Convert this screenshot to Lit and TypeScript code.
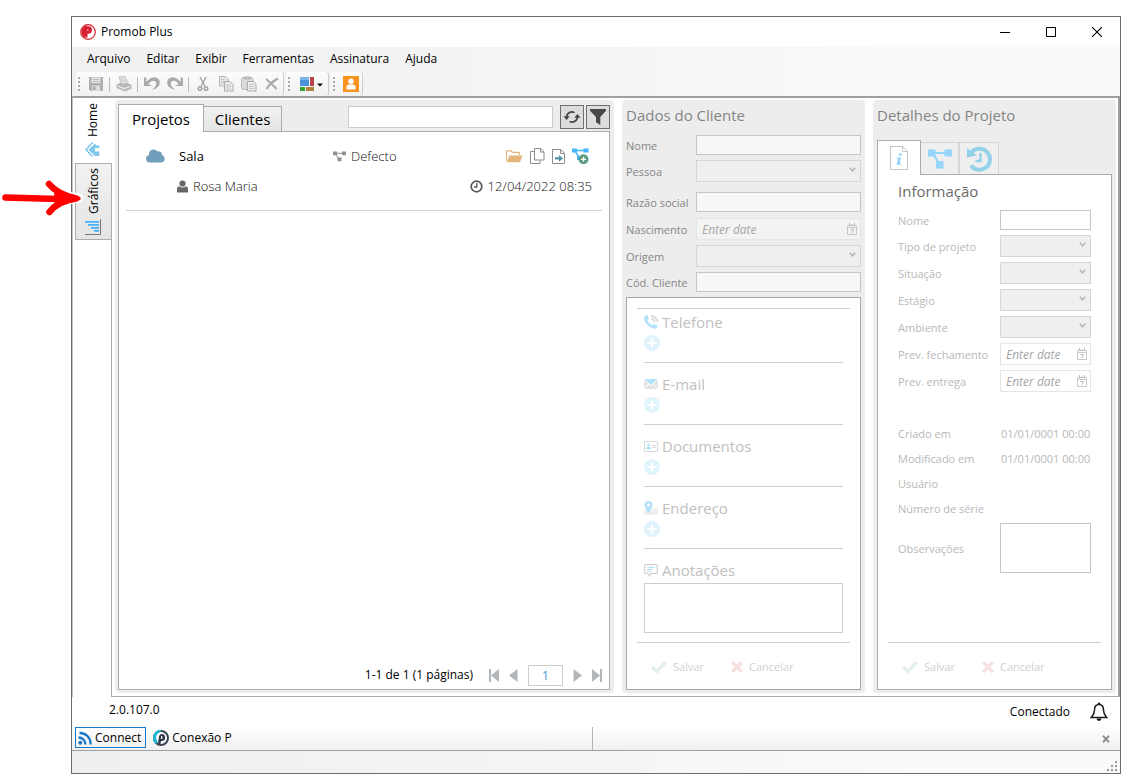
import { LitElement, html, css, svg, nothing } from "lit";
import { customElement, property } from "lit/decorators.js";

const icons: Record<string, unknown> = {
  logo: svg`<svg width="16" height="16" viewBox="0 0 16 16"><circle cx="8" cy="8" r="7.300" fill="#fff" stroke="#d02330" stroke-width="1.200"/><path d="M8 1.500A6.500 6.500 0 0 0 5.500 14L6.300 9.500 7 2.200Z" fill="#d6202f"/><path d="M8.300 2.300a3.700 3.700 0 0 1 0 7.400H7.500V13.300L5.500 13.800 4.500 8 6 2.600Z" fill="#d6202f"/><path d="M7 5.500h1.500v1.200H7z" fill="#f5b8bc"/></svg>`,
  min: svg`<svg width="10" height="10"><path d="M0 5.500h10" stroke="#000"/></svg>`,
  max: svg`<svg width="10" height="10"><path d="M.5 .5h9v9h-9z" stroke="#000" fill="none"/></svg>`,
  close: svg`<svg width="10" height="10"><path d="M0 0l10 10M10 0L0 10" stroke="#000" stroke-width="1.100"/></svg>`,
  save: svg`<svg width="16" height="16" viewBox="0 0 16 16"><path d="M1 1h14v14H2.500L1 13.500Z" fill="#b0b0b0"/><path d="M3.500 1.500h9v5.500h-9z" fill="#e6e6e6"/><path d="M4.500 3.500h7M4.500 5.500h7" stroke="#b4b4b4" stroke-width=".8"/><path d="M4 9.500h8V15H4z" fill="#dedede"/><path d="M5 10.500h2.500V14H5z" fill="#a6a6a6"/></svg>`,
  print: svg`<svg width="16" height="16" viewBox="0 0 16 16"><path d="M3 1l6-.7 3 6.700-6.500 1Z" fill="#e8e8e8" stroke="#b8b8b8" stroke-width=".8"/><path d="M4.500 3h4M5.500 5h4.500" stroke="#bbb" stroke-width=".8"/><path d="M.5 8.500l4-2 1.500 1.500 5.500-1 4 2v4l-7 2.500-8-3.500Z" fill="#b8b8b8"/><path d="M2 10l6 2.500 6-2" stroke="#ececec" stroke-width="1.200" fill="none"/><path d="M4 13l5 2.200 5-2.200" stroke="#ccc" fill="none"/></svg>`,
  undo: svg`<svg width="16" height="16" viewBox="0 0 16 16"><path d="M0 1.500h2.300V6C4.500 3.500 7.500 1 10.800 1.300 14 1.700 16 4 15.700 7.200 15.400 10.300 12.500 13 8 13.500 11 11.500 12.500 9.500 12.200 7.200 11.900 4.800 9 4.200 7 5.600 6 6.300 5 7.300 4.500 8.300L8.500 10H0Z" fill="#a9a9a9"/></svg>`,
  redo: svg`<svg width="16" height="16" viewBox="0 0 16 16"><path d="M16 1.500h-2.300V6C11.500 3.500 8.500 1 5.200 1.300 2 1.700 0 4 .3 7.200.6 10.300 3.500 13 8 13.500 5 11.500 3.500 9.500 3.800 7.200 4.100 4.800 7 4.200 9 5.600c1 .7 2 1.700 2.500 2.700L7.500 10H16Z" fill="#a9a9a9"/></svg>`,
  cut: svg`<svg width="16" height="16" viewBox="0 0 16 16"><path d="M5 1l4.800 9M11 1L6.200 10" stroke="#a8a8a8" stroke-width="1.500"/><circle cx="5" cy="12.500" r="1.800" fill="none" stroke="#a0a0a0" stroke-width="1.400"/><circle cx="11" cy="12.500" r="1.800" fill="none" stroke="#a0a0a0" stroke-width="1.400"/></svg>`,
  copy: svg`<svg width="16" height="16" viewBox="0 0 16 16"><path d="M1.500 .5h6l2.500 2.500v7h-8.500z" fill="#e8e8e8" stroke="#b8b8b8"/><path d="M3 3.500h4M3 5.500h3M3 7.500h3" stroke="#c4c4c4"/><path d="M6.500 5.500h5.500l3 3v6.500h-8.500z" fill="#ededed" stroke="#aaa"/><path d="M8 9h5M8 11h5M8 13h5" stroke="#b8b8b8" stroke-width=".8"/></svg>`,
  paste: svg`<svg width="16" height="16" viewBox="0 0 16 16"><rect x=".5" y="1.500" width="11.500" height="12" rx="2" fill="#dadada" stroke="#b8b8b8"/><path d="M3.500 3V1h1.800a1.300 1.300 0 0 1 2 0H9v2z" fill="#c8c8c8" stroke="#aaa" stroke-width=".8"/><path d="M6.500 5.500h6l2.500 2.500v7h-8.500z" fill="#ededed" stroke="#aaa"/><path d="M8 8.500h5M8 10.500h5M8 12.500h5" stroke="#b8b8b8" stroke-width=".8"/></svg>`,
  del: svg`<svg width="16" height="16" viewBox="0 0 16 16"><path d="M2 3c4 3 7 6 10.500 10M14 2.500C9 5 5 9 2.500 13" fill="none" stroke="#a6a6a6" stroke-width="2"/></svg>`,
  layout: svg`<svg width="24" height="16" viewBox="0 0 24 16"><path d="M1 1h9v9H1z" fill="#4a8fd8"/><path d="M1 1h9v3H1z" fill="#7cb4ec"/><path d="M11 1h4v9h-4z" fill="#b8434c"/><path d="M1 11h5v4H1z" fill="#2fa32f"/><path d="M7 11h8v4H7z" fill="#b08238"/><path d="M18 7.500h6l-3 3z" fill="#000"/></svg>`,
  user: svg`<svg width="16" height="16" viewBox="0 0 16 16"><path d="M0 0h16v16H0z" fill="#f7931e"/><circle cx="8" cy="5.300" r="2.700" fill="#fff"/><path d="M3.500 13.500V11q0-2.500 2.500-2.500h4q2.500 0 2.500 2.500v2.500z" fill="#fff"/></svg>`,
  home: svg`<svg width="16" height="16" viewBox="0 0 16 16"><path d="M7.500 .5L1 7.500l6.500 7" fill="none" stroke="#5db8ea" stroke-width="1.500" stroke-dasharray="2 .6"/><path d="M10 1.500l-6.500 6.200 6.500 6.300h4.300V9.500H10V6h4.300V3.500H11Z" fill="#80c6ea"/></svg>`,
  chart: svg`<svg width="16" height="16" viewBox="0 0 16 16"><path d="M15.500 0v15.500H0" fill="none" stroke="#777"/><path d="M0 2h14v1.800H0zM3 5h11v1.800H3zM6 8h8v1.800H6zM9 11h5v1.800H9z" fill="#45b0f5"/></svg>`,
  refresh: svg`<svg width="18" height="18" viewBox="0 0 18 18"><path d="M3.600 9.500A5.300 5.300 0 0 1 11.500 4.600M14.400 8.500A5.300 5.300 0 0 1 6.500 13.400" fill="none" stroke="#444" stroke-width="1.600"/><path d="M.5 8.300h6.200L3.600 12ZM17.500 9.700h-6.200L14.400 6Z" fill="#444"/></svg>`,
  filter: svg`<svg width="18" height="18" viewBox="0 0 18 18"><path d="M1 1h16v1.800L11.300 9v8l-4.300-2.800V9L1 2.800Z" fill="#484848"/></svg>`,
  cloud: svg`<svg width="19" height="14" viewBox="0 0 19 14"><path d="M4 13.500A3.800 3.800 0 0 1 3 6 C2.800 2.500 5 .5 7.500 .5c1.800 0 3.200 .8 3.900 2 2.600-.8 4.800 .8 4.600 3.300 1.500 .8 2.700 2.300 2.700 4 0 2.200-1.400 3.700-3.400 3.700Z" fill="#719fbb"/></svg>`,
  net: svg`<svg width="13" height="11" viewBox="0 0 13 11"><path d="M2 2.300h9M2.500 2.500L6 8.500" stroke="#a5a5a5" stroke-width="1.200"/><path d="M0 .5h4v3.700H0zM9 .5h4v3.700H9zM4.500 6.500h4v3.700h-4z" fill="#8f8f8f"/></svg>`,
  folder: svg`<svg width="17" height="13" viewBox="0 0 17 13"><path d="M.5 11V1.500Q.5 .8 1.200 .8h4l1.300 1.500h6q.8 0 .8 .8V5" fill="none" stroke="#e3b77c" stroke-width="1.200"/><path d="M3.500 5.500H16.500L14 12.300H.7Z" fill="#e3b77c"/></svg>`,
  pages: svg`<svg width="15" height="16" viewBox="0 0 15 16"><path d="M4.500 .5h6.300l3.200 3.200V12H4.500zM10.500 .5V4H14M4.500 3.500h-4v12H10V12" fill="none" stroke="#8c8c8c"/></svg>`,
  exportDoc: svg`<svg width="13" height="15" viewBox="0 0 13 15"><path d="M.5 .5h8.300l3.700 3.700v10.300H.5zM8.500 .5v4h4" fill="none" stroke="#8c8c8c"/><path d="M3 8.200h4V6l4 3.400-4 3.300v-2.200H3z" fill="#5793a8"/></svg>`,
  netAdd: svg`<svg width="17" height="17" viewBox="0 0 17 17"><path d="M2 2.500h12M3 3l4 6" stroke="#45b5ff" stroke-width="1.500"/><path d="M0 .5h5v4H0zM11.500 .5h5v4h-5z" fill="#45b5ff"/><path d="M5 8h4v4H5z" fill="#45b5ff"/><circle cx="11.500" cy="11.300" r="5" fill="#5f9d82"/><path d="M11.500 8.800v5M9 11.300h5" stroke="#fff" stroke-width="1.300"/></svg>`,
  person: svg`<svg width="11" height="13" viewBox="0 0 11 13"><circle cx="5.500" cy="3.500" r="3.100" fill="#666"/><path d="M0 12V9q0-2.500 2-2.800Q5.500 9 9 6.200 11 6.500 11 9v3q0 .5-1 .5H1Q0 12.500 0 12Z" fill="#666"/></svg>`,
  clock: svg`<svg width="13" height="13" viewBox="0 0 13 13"><circle cx="6.500" cy="6.500" r="5.300" fill="none" stroke="#555" stroke-width="1.700"/><path d="M6.800 3v4H4" fill="none" stroke="#555" stroke-width="1.300"/></svg>`,
  first: svg`<svg width="10" height="13"><path d="M0 0h2v13H0zM10 0v13L2 6.500z" fill="#b4b7ba"/></svg>`,
  prev: svg`<svg width="9" height="13"><path d="M8.500 0v13L0 6.500z" fill="#b4b7ba"/></svg>`,
  next: svg`<svg width="9" height="13"><path d="M.5 0v13L9 6.500z" fill="#b4b7ba"/></svg>`,
  last: svg`<svg width="10" height="13"><path d="M8 0h2v13H8zM0 0v13l8-6.500z" fill="#b4b7ba"/></svg>`,
  calendar: svg`<svg width="10" height="12" viewBox="0 0 10 12"><path d="M.5 2.500h9v9h-9zM.5 4.500h9" fill="none" stroke="#c8c8c8"/><path d="M2.500 0v3M5 1v2M7.500 0v3M3.300 6.500h3.200L4.800 10" stroke="#bcbcbc" fill="none"/></svg>`,
  plus: svg`<svg width="16" height="16" viewBox="0 0 16 16"><circle cx="8" cy="8" r="8" fill="#e1f4fe"/><path d="M8 3.500v9M3.500 8h9" stroke="#fff" stroke-width="2.200"/></svg>`,
  phone: svg`<svg width="14" height="14" viewBox="0 0 14 14"><path d="M1 .7L3.800 .2 5 4 3.300 5.300Q4.500 8.500 8 10.200L9.700 8.700 13.500 10.500 13 13.300Q10.500 14.500 6.800 12.300 .6 9 .1 3.500 0 1.500 1 .7Z" fill="#b5e2fb"/><path d="M7 .8a6 6 0 0 1 6.300 6.500M7 3.500a3.300 3.300 0 0 1 3.500 3.700" fill="none" stroke="#d5d5d5" stroke-width="1.500"/></svg>`,
  mail: svg`<svg width="14" height="10" viewBox="0 0 14 10"><path d="M0 0h14v10H0z" fill="#e3e3e3"/><path d="M0 0h14L7 6.200z" fill="#b5e2fb"/><path d="M0 .4L7 6.600 14 .4M.3 10l4.500-5M13.700 10L9.200 5" fill="none" stroke="#fff"/></svg>`,
  card: svg`<svg width="14" height="11" viewBox="0 0 14 11"><path d="M.5 .5h13v10H.5z" fill="none" stroke="#d9d9d9"/><circle cx="4.500" cy="3.800" r="1.400" fill="#b5e2fb"/><path d="M2 8.300Q2 5.500 4.500 5.500T7 8.300Z" fill="#b5e2fb"/><path d="M8 4.500h4M8 6.500h4" stroke="#d9d9d9"/></svg>`,
  pin: svg`<svg width="14" height="14" viewBox="0 0 14 14"><path d="M0 9h14v5H0zM9 7h5v3H9z" fill="#efefef"/><path d="M4.500 0a4 4 0 0 1 4 4Q8.500 7 4.500 12.500 .5 7 .5 4a4 4 0 0 1 4-4Z" fill="#b5e2fb"/><circle cx="4.500" cy="4" r="1.500" fill="#fff"/></svg>`,
  note: svg`<svg width="14" height="13" viewBox="0 0 14 13"><path d="M1.500 .7h11q.8 0 .8 .8v7q0 .8-.8 .8H7L5.800 12 3.800 9.300H1.500q-.8 0-.8-.8v-7q0-.8.8-.8Z" fill="none" stroke="#d0d0d0" stroke-width="1.200"/><path d="M3 3.500h8M3 5.500h6M3 7.200h4" stroke="#b5e2fb"/></svg>`,
  check: svg`<svg width="16" height="13" viewBox="0 0 16 13"><path d="M0 7.300L2.700 5l3 3L13.300 0 16 2.200 6 12.800Z" fill="#e3f0ea"/></svg>`,
  cross: svg`<svg width="12" height="12" viewBox="0 0 12 12"><path d="M1.300 1.300l9.400 9.400M10.700 1.300L1.300 10.700" stroke="#f8e1e1" stroke-width="3.500"/></svg>`,
  info: svg`<svg width="18" height="24" viewBox="0 0 18 24"><path d="M.5 .5h12l5 5v18H.5zM12.500 .5v5h5" fill="none" stroke="#c6c6c6"/><path d="M9.300 7.500h2.600l-.5 2.300H8.800zM7 11.500h4l-1.300 6h1.300l-.3 1.300H6.600l1.400-6H6.600Z" fill="#8fd2fb"/></svg>`,
  netBig: svg`<svg width="24" height="20" viewBox="0 0 24 20"><path d="M4 4h16M5 5l6 9" stroke="#95d5fa" stroke-width="2"/><path d="M0 .5h7.500v7H0zM16.500 .5H24v7h-7.500zM8 12h7.500v7.500H8z" fill="#95d5fa"/></svg>`,
  history: svg`<svg width="25" height="26" viewBox="0 0 25 26"><path d="M4.500 6.500A10.500 10.500 0 1 1 4 19.500" fill="none" stroke="#94d2ea" stroke-width="4"/><path d="M0 2v9.500L10 9.500Z" fill="#94d2ea"/><path d="M13.500 7v8H8.500" fill="none" stroke="#94d2ea" stroke-width="2.500"/></svg>`,
  bell: svg`<svg width="18" height="20" viewBox="0 0 18 20"><path d="M9 2.500C5.800 2.500 4.500 5 4.500 8 4.500 12 3 13.500 1.300 15.500H16.700C15 13.500 13.500 12 13.500 8 13.500 5 12.200 2.500 9 2.500Z" fill="none" stroke="#1c1c1c" stroke-width="1.500"/><circle cx="9" cy="1.800" r="1.300" fill="#1c1c1c"/><path d="M6.500 16.500h5a2.500 2.500 0 0 1-5 0Z" fill="#1c1c1c"/></svg>`,
  feed: svg`<svg width="14" height="14" viewBox="0 0 14 14"><circle cx="2.300" cy="11.700" r="2" fill="#1979ca"/><path d="M.5 6.500a7 7 0 0 1 7 7M1.500 2a10.500 10.500 0 0 1 11 11.500" fill="none" stroke="#1979ca" stroke-width="2.300"/></svg>`,
  pconn: svg`<svg width="16" height="16" viewBox="0 0 16 16"><circle cx="8" cy="8" r="7" fill="#fff" stroke="#3a4454" stroke-width="2"/><path d="M8 0A8 8 0 0 0 2.500 13.800L5 12 A6 6 0 0 1 8 1.800Z" fill="#1db7d2"/><path d="M8.500 4a3.500 3.500 0 1 1 .2 7H8L7.300 14.500 5 13.500 6 6.500A3.300 3.300 0 0 1 8.500 4Z" fill="#2d3646"/><path d="M8.700 6v3" stroke="#fff" stroke-width="1.300"/></svg>`,
  smallX: svg`<svg width="8" height="8" viewBox="0 0 8 8"><path d="M1 .8l6 6.400M7 .8L1 7.200" stroke="#929292" stroke-width="2"/></svg>`,
  grip: svg`<svg width="10" height="10"><path d="M8 0h2v2H8zM4 4h2v2H4zM8 4h2v2H8zM0 8h2v2H0zM4 8h2v2H4zM8 8h2v2H8z" fill="#999"/></svg>`,
  arrow: svg`<svg width="86" height="44" viewBox="0 0 86 44"><g fill="none" stroke-linecap="round" stroke-linejoin="round"><path d="M49 8Q60 20 79 22Q60 24 49 36" stroke="#fff" stroke-width="9"/><path d="M5.500 21.500L58 23" stroke="#f00" stroke-width="6.500"/><path d="M49 8Q57 18 76 22.500Q58 25 49.500 36" stroke="#f00" stroke-width="6.500"/><path d="M56 17L79 22.500 56 28Z" fill="#f00" stroke="#f00" stroke-width="3.500"/></g></svg>`,
};

const shared = css`
  :host { display: block; box-sizing: border-box; }
  *, *::before, *::after { box-sizing: border-box; }
  svg { display: block; flex: none; }
  button, input, select, textarea { font: inherit; color: inherit; margin: 0; border-radius: 0; outline: none; }
  button { display: flex; align-items: center; background: none; border: 0; padding: 0; white-space: nowrap; }
  textarea { display: block; resize: none; }
`;

type Kind = "text" | "select" | "date" | "memo" | "value";

@customElement("form-row")
class FormRow extends LitElement {
  static styles = [shared, css`
    .row { display: flex; align-items: center; font-size: 11px; }
    label, .caption { flex: none; width: var(--label-width); white-space: nowrap; }
    label { padding-top: 2px; }
    .control { flex: 1; min-width: 0; width: 0; display: block; border: 1px solid #c6c6c9; background: var(--field-bg); padding: 0 4px; }
    input.control { height: 20px; }
    .pick { position: relative; flex: 1; min-width: 0; display: flex; }
    .pick svg { position: absolute; right: 5px; top: 7px; }
    select.control { height: 22px; appearance: none; background: #efefef; border-color: #d6d6d6; opacity: 1; }
    .date { height: 22px; display: flex; align-items: center; padding: 0 3px 0 5px; border-color: #e5e5e5; background: var(--date-bg); font-size: 12px; }
    .date input { flex: 1; min-width: 0; width: 0; border: 0; padding: 2px 0 0; background: none; font-style: italic; }
    .date input::placeholder { color: #a6a6a6; opacity: 1; }
    textarea.control { height: 50px; background: #fff; }
    .value { flex: 1; min-width: 0; padding-left: 1px; white-space: nowrap; }
  `];
  @property() label = "";
  @property() kind: Kind = "text";
  @property() value = "";

  private control() {
    switch (this.kind) {
      case "select":
        return html`<span class="pick"><select id="f" class="control" disabled></select>
          <svg width="7" height="6"><path d="M.8 .8L3.500 3.800 6.200 .8" fill="none" stroke="#b5b5b5" stroke-width="1.500" /></svg></span>`;
      case "date":
        return html`<span class="control date"><input id="f" placeholder="Enter date" disabled />${icons.calendar}</span>`;
      case "memo":
        return html`<textarea id="f" class="control" disabled></textarea>`;
      default:
        return html`<input id="f" class="control" disabled />`;
    }
  }

  render() {
    return this.kind === "value"
      ? html`<div class="row"><span class="caption">${this.label}</span><span class="value">${this.value}</span></div>`
      : html`<div class="row"><label for="f">${this.label}</label>${this.control()}</div>`;
  }
}

@customElement("save-bar")
class SaveBar extends LitElement {
  static styles = [shared, css`
    .bar { display: flex; gap: 27px; border-top: 1px solid #cfcfcf; padding: 15px 14px 13px; color: #d0d0d0; font-size: 11px; }
    button { gap: 6px; height: 18px; }
  `];
  render() {
    return html`<div class="bar">
      <button disabled>${icons.check}Salvar</button>
      <button disabled>${icons.cross}Cancelar</button>
    </div>`;
  }
}

@customElement("projects-panel")
class ProjectsPanel extends LitElement {
  static styles = [shared, css`
    :host { display: flex; flex-direction: column; background: #ededed; border-radius: 4px; padding: 4px 4px 3px 3px; }
    .head { display: flex; align-items: flex-end; height: 27px; }
    .tab { justify-content: center; height: 25px; width: 78px; font-size: 15px; border: 1px solid #acacac; border-bottom: 0; border-left: 0; background: linear-gradient(#f1f1f1, #e5e5e5); }
    .tab.on { height: 28px; width: 86px; margin-bottom: -1px; border-left: 1px solid #acacac; background: #fff; position: relative; }
    .tools { flex: 1; display: flex; align-items: center; justify-content: flex-end; height: 25px; margin-bottom: 2px; gap: 2px; }
    .search { flex: 0 1 205px; min-width: 0; height: 22px; border: 1px solid #cdcdcd; background: #fff; margin-right: 5px; padding: 0 4px; }
    .tool { width: 24px; height: 24px; justify-content: center; border: 1px solid #707070; background: #ddd; }
    .body { flex: 1; display: flex; flex-direction: column; border: 1px solid #acacac; background: #fff; padding: 0 7px 3px; }
    .project { border-bottom: 1px solid #d2d2d2; padding: 14px 10px 14px 20px; color: #333; font-size: 13px; }
    .line { display: flex; align-items: center; height: 20px; }
    .line + .line { margin-top: 10px; padding-left: 31px; justify-content: space-between; }
    .name { width: 168px; padding-left: 14px; color: #000; }
    .group { display: flex; align-items: center; gap: 5px; }
    .actions { margin-left: auto; display: flex; align-items: center; gap: 7px; padding-right: 3px; }
    .light { font-weight: 300; color: #111; }
    .pager { margin-top: auto; display: flex; align-items: center; justify-content: flex-end; gap: 10px; height: 22px; font-size: 12px; }
    .total { margin-right: 6px; }
    .page { width: 35px; height: 21px; text-align: center; border: 1px solid #cdcdcd; color: #3d95d6; background: #fff; padding: 0; }
  `];
  render() {
    return html`
      <div class="head" role="tablist">
        <button class="tab on" role="tab" aria-selected="true">Projetos</button>
        <button class="tab" role="tab" aria-selected="false">Clientes</button>
        <div class="tools">
          <input class="search" type="text" aria-label="Pesquisar" />
          <button class="tool" aria-label="Atualizar">${icons.refresh}</button>
          <button class="tool" aria-label="Filtrar">${icons.filter}</button>
        </div>
      </div>
      <div class="body">
        <article class="project">
          <div class="line">
            ${icons.cloud}<span class="name">Sala</span>
            <span class="group">${icons.net}<span class="light">Defecto</span></span>
            <span class="actions">
              <button aria-label="Abrir">${icons.folder}</button>
              <button aria-label="Copiar">${icons.pages}</button>
              <button aria-label="Exportar">${icons.exportDoc}</button>
              <button aria-label="Adicionar etapa">${icons.netAdd}</button>
            </span>
          </div>
          <div class="line">
            <span class="group">${icons.person}<span class="light">Rosa Maria</span></span>
            <span class="group">${icons.clock}<span class="light">12/04/2022 08:35</span></span>
          </div>
        </article>
        <div class="pager">
          <span class="total">1-1 de 1 (1 páginas)</span>
          <button aria-label="Primeira">${icons.first}</button>
          <button aria-label="Anterior">${icons.prev}</button>
          <input class="page" value="1" aria-label="Página" />
          <button aria-label="Próxima">${icons.next}</button>
          <button aria-label="Última">${icons.last}</button>
        </div>
      </div>`;
  }
}

@customElement("client-panel")
class ClientPanel extends LitElement {
  static styles = [shared, css`
    :host { display: flex; flex-direction: column; background: #ededed; border-radius: 4px; padding: 4px 4px 3px; color: #858585; font-size: 12px; }
    h2 { margin: 0; height: 31px; line-height: 22px; font-size: 15px; font-weight: 400; }
    .form { display: flex; flex-direction: column; gap: 5px; --label-width: 70px; --field-bg: #f7f7f7; --date-bg: #f3f3f3; margin-bottom: 5px; }
    .space { margin-top: 5px; }
    .tight { margin-top: 1px; }
    .body { flex: 1; display: flex; flex-direction: column; justify-content: space-between; border: 1px solid #a6a6a6; background: #fff; padding: 10px 10px 0; }
    .sections { border-top: 1px solid #cfcfcf; padding: 0 7px; color: #c0c0c0; }
    .section { border-bottom: 1px solid #cfcfcf; height: 54px; margin-bottom: 8px; }
    .section.open { border: 0; height: auto; margin: 0; }
    h3 { margin: 0; display: flex; align-items: center; gap: 4px; height: 26px; font-size: 15px; font-weight: 400; }
    textarea { width: 100%; height: 50px; border: 1px solid #cdcdcd; background: #fff; }
  `];
  private section(icon: string, title: string) {
    return html`<section class="section"><h3>${icons[icon]}${title}</h3>
      <button disabled aria-label="Adicionar ${title}">${icons.plus}</button></section>`;
  }
  render() {
    return html`
      <h2>Dados do Cliente</h2>
      <div class="form">
        <form-row label="Nome"></form-row>
        <form-row label="Pessoa" kind="select"></form-row>
        <form-row class="space" label="Razão social"></form-row>
        <form-row class="tight" label="Nascimento" kind="date"></form-row>
        <form-row label="Origem" kind="select"></form-row>
        <form-row label="Cód. Cliente"></form-row>
      </div>
      <div class="body">
        <div class="sections">
          ${this.section("phone", "Telefone")}${this.section("mail", "E-mail")}
          ${this.section("card", "Documentos")}${this.section("pin", "Endereço")}
          <section class="section open"><h3>${icons.note}Anotações</h3>
            <textarea disabled aria-label="Anotações"></textarea></section>
        </div>
        <save-bar></save-bar>
      </div>`;
  }
}

@customElement("project-panel")
class ProjectPanel extends LitElement {
  static styles = [shared, css`
    :host { display: flex; flex-direction: column; background: #ededed; border-radius: 4px; padding: 4px 4px 3px; color: #b8b8b8; font-size: 12px; }
    h2 { margin: 0; height: 36px; line-height: 22px; font-size: 15px; font-weight: 400; color: #858585; }
    .tabs { display: flex; align-items: flex-end; height: 34px; }
    .tab { justify-content: center; width: 38px; height: 32px; border: 1px solid #d6d6d6; border-left: 0; border-bottom: 0; background: #efefef; }
    .tab + .tab + .tab { width: 40px; border-left: 1px solid #d6d6d6; }
    .tab.on { width: 44px; height: 35px; margin-bottom: -1px; border: 1px solid #acacac; border-bottom: 0; background: #fff; position: relative; }
    .body { flex: 1; display: flex; flex-direction: column; justify-content: space-between; border: 1px solid #acacac; background: #fff; padding: 4px 10px 0; }
    .form { display: flex; flex-direction: column; gap: 5px; padding: 0 10px; --label-width: 102px; --field-bg: #fff; --date-bg: #fff; }
    h3 { margin: 0 0 2px; height: 24px; line-height: 24px; font-size: 15px; font-weight: 400; color: #6b6b6b; }
    .info { display: flex; flex-direction: column; gap: 7px; margin-top: 28px; line-height: 18px; }
  `];
  render() {
    return html`
      <h2>Detalhes do Projeto</h2>
      <div class="tabs" role="tablist">
        <button class="tab on" role="tab" aria-label="Informação">${icons.info}</button>
        <button class="tab" role="tab" aria-label="Etapas">${icons.netBig}</button>
        <button class="tab" role="tab" aria-label="Histórico">${icons.history}</button>
      </div>
      <div class="body">
        <div class="form">
          <h3>Informação</h3>
          <form-row label="Nome"></form-row>
          <form-row label="Tipo de projeto" kind="select"></form-row>
          <form-row label="Situação" kind="select"></form-row>
          <form-row label="Estágio" kind="select"></form-row>
          <form-row label="Ambiente" kind="select"></form-row>
          <form-row label="Prev. fechamento" kind="date"></form-row>
          <form-row label="Prev. entrega" kind="date"></form-row>
          <div class="info">
            <form-row label="Criado em" kind="value" value="01/01/0001 00:00"></form-row>
            <form-row label="Modificado em" kind="value" value="01/01/0001 00:00"></form-row>
            <form-row label="Usuário" kind="value"></form-row>
            <form-row label="Número de série" kind="value"></form-row>
          </div>
          <form-row label="Observações" kind="memo"></form-row>
        </div>
        <save-bar></save-bar>
      </div>`;
  }
}

@customElement("app-root")
class AppRoot extends LitElement {
  static styles = [shared, css`
    :host { position: relative; display: flex; min-height: 100vh; padding: 16px 7px 3px 71px; background: #fff; font-family: "Open Sans", "Noto Sans", sans-serif; font-size: 12px; line-height: 16px; color: #000; }
    .window { flex: 1; min-width: 0; display: flex; flex-direction: column; border: 1px solid #6d6d6d; background: #fff; }
    .title { display: flex; align-items: center; height: 30px; padding-left: 8px; gap: 5px; }
    .title .buttons { margin-left: auto; display: flex; align-self: stretch; }
    .title .buttons button { width: 46px; justify-content: center; }
    .bars { background: linear-gradient(90deg, #f0f0f0, #f5f5f5 50%, #fafafa 80%); }
    .menu { display: flex; align-items: center; gap: 16px; height: 25px; padding: 0 15px 2px; }
    .toolbars { display: flex; height: 24px; gap: 2px; padding-left: 4px; }
    .toolbar { display: flex; align-items: center; background: linear-gradient(#fcfcfc, #f1f1f1); border-right: 1px solid #ccc; padding-left: 2px; border-radius: 3px; }
    .toolbar button { width: 23px; height: 23px; justify-content: center; }
    .toolbar .wide { width: 34px; }
    .handle { width: 2px; height: 14px; margin-right: 4px; background: repeating-linear-gradient(#a8a8a8 0 2px, transparent 2px 4px); }
    .sep { width: 1px; height: 15px; margin: 0 2px; background: #bdbdbd; }
    .main { flex: 1; display: flex; border-top: 2px solid #a0a0a0; border-left: 1px solid #c4c4c4; border-right: 2px solid #a0a0a0; }
    .side { flex: none; width: 39px; display: flex; flex-direction: column; align-items: stretch; }
    .side button { writing-mode: vertical-rl; transform: rotate(180deg); justify-content: flex-start; gap: 5px; }
    .side svg { transform: rotate(180deg); }
    .side .home { height: 65px; padding: 5px 11px 5px 10px; }
    .side .charts { height: 77px; margin-left: 2px; border: 1px solid #acacac; background: linear-gradient(0deg, #f2f2f2, #e4e4e4); padding: 4px 9px; }
    .side .rest { flex: 1; border-right: 1px solid #acacac; }
    .panels { flex: 1; min-width: 0; display: grid; grid-template-columns: minmax(0, 1fr) 243px 243px; gap: 8px; padding: 2px 2px 3px 3px; border-bottom: 1px solid #acacac; }
    .status { display: flex; align-items: center; justify-content: space-between; height: 29px; padding: 0 12px 0 37px; }
    .status .version { padding-bottom: 3px; }
    .online { display: flex; align-items: center; gap: 20px; }
    .dock { display: flex; height: 25px; border-bottom: 1px solid #a0a0a0; background: linear-gradient(#fefefe, #f1f1f1); padding: 1px 10px 0 3px; }
    .dock .tabs { flex: 0 0 50%; margin-right: 4px; display: flex; gap: 4px; border-right: 1px solid #b4b4b4; align-items: flex-start; }
    .dock .tabs button { gap: 3px; height: 21px; border: 1px solid transparent; padding: 0 4px 0 2px; }
    .dock .tabs .on { border-color: #1979ca; }
    .dock .close { margin-left: auto; }
    .foot { display: flex; align-items: flex-end; justify-content: flex-end; height: 22px; padding: 0 3px 2px; background: linear-gradient(90deg, #efefef, #f5f5f5 50%, #fafafa 80%); }
    .pointer { position: absolute; left: 0; top: 176px; pointer-events: none; }
  `];

  private tool(icon: string, label: string, cls = "") {
    return html`<button class=${cls || nothing} aria-label=${label}>${icons[icon]}</button>`;
  }

  render() {
    const sep = html`<span class="sep"></span>`;
    const handle = html`<span class="handle"></span>`;
    return html`
      <div class="window">
        <header class="title">${icons.logo}<span>Promob Plus</span>
          <div class="buttons">
            <button aria-label="Minimizar">${icons.min}</button>
            <button aria-label="Maximizar">${icons.max}</button>
            <button aria-label="Fechar">${icons.close}</button>
          </div>
        </header>
        <div class="bars">
          <nav class="menu">
            ${["Arquivo", "Editar", "Exibir", "Ferramentas", "Assinatura", "Ajuda"].map((m) => html`<button>${m}</button>`)}
          </nav>
          <div class="toolbars">
            <div class="toolbar">${handle}
              ${this.tool("save", "Salvar")}${sep}${this.tool("print", "Imprimir")}${sep}
              ${this.tool("undo", "Desfazer")}${this.tool("redo", "Refazer")}${sep}
              ${this.tool("cut", "Recortar")}${this.tool("copy", "Copiar")}${this.tool("paste", "Colar")}${this.tool("del", "Excluir")}
            </div>
            <div class="toolbar">${handle}${this.tool("layout", "Layout", "wide")}</div>
            <div class="toolbar">${handle}${this.tool("user", "Usuário")}</div>
          </div>
        </div>
        <main class="main">
          <nav class="side">
            <button class="home">${icons.home}Home</button>
            <button class="charts">${icons.chart}Gráficos</button>
            <div class="rest"></div>
          </nav>
          <div class="panels">
            <projects-panel></projects-panel>
            <client-panel></client-panel>
            <project-panel></project-panel>
          </div>
        </main>
        <div class="status"><span class="version">2.0.107.0</span>
          <span class="online">Conectado<button aria-label="Notificações">${icons.bell}</button></span>
        </div>
        <div class="dock">
          <div class="tabs"><button class="on">${icons.feed}Connect</button><button>${icons.pconn}Conexão P</button></div>
          <button class="close" aria-label="Fechar painel">${icons.smallX}</button>
        </div>
        <footer class="foot">${icons.grip}</footer>
      </div>
      <div class="pointer">${icons.arrow}</div>`;
  }
}
